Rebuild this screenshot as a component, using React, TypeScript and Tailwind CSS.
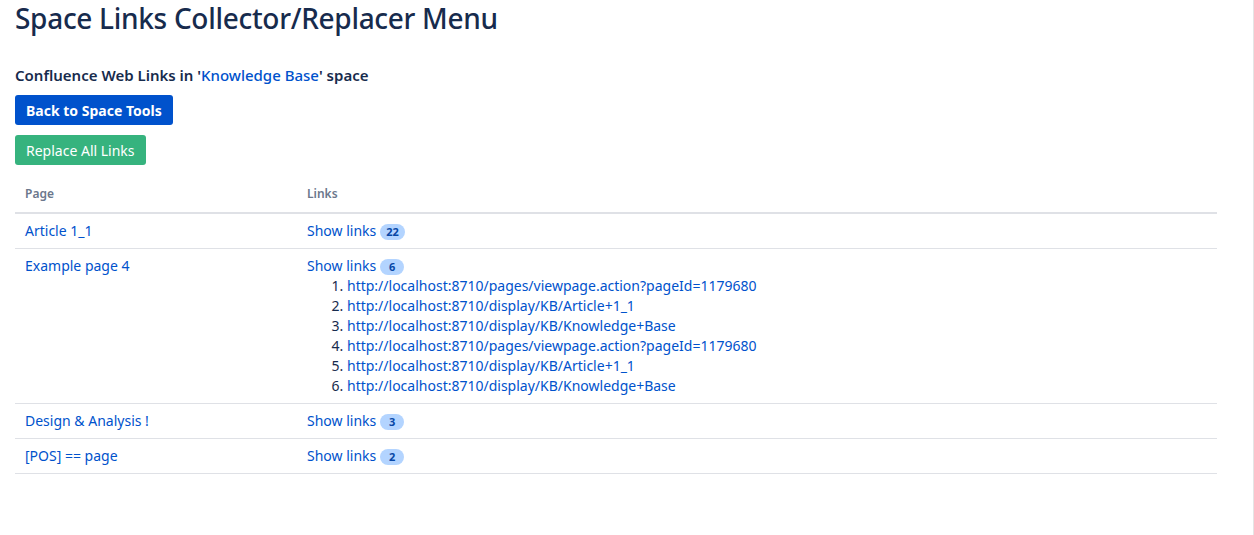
const rows = [
  { page: 'Article 1_1', count: 22, links: [] as string[] },
  {
    page: 'Example page 4',
    count: 6,
    links: [
      'http://localhost:8710/pages/viewpage.action?pageId=1179680',
      'http://localhost:8710/display/KB/Article+1_1',
      'http://localhost:8710/display/KB/Knowledge+Base',
      'http://localhost:8710/pages/viewpage.action?pageId=1179680',
      'http://localhost:8710/display/KB/Article+1_1',
      'http://localhost:8710/display/KB/Knowledge+Base',
    ],
  },
  { page: 'Design & Analysis !', count: 3, links: [] as string[] },
  { page: '[POS] == page', count: 2, links: [] as string[] },
];

export default function App() {
  return (
    <div
      className="h-[535px] w-[1254px] overflow-hidden bg-white text-[14px] text-[#172b4d] border-r border-[#e5e5e5]"
      style={{ fontFamily: '"Noto Sans", "Open Sans", sans-serif' }}
    >
      <div className="w-[1217px] pl-[15px]">
        <h1 className="pt-[1px] text-[28px] leading-[34px] font-medium tracking-[-0.3px]">
          Space Links Collector/Replacer Menu
        </h1>
        <h2 className="mt-[30px] text-[15px] leading-[20px] font-semibold">
          Confluence Web Links in '<a className="text-[#0052cc] font-medium">Knowledge Base</a>' space
        </h2>
        <div className="mt-[10px] flex flex-col items-start gap-[10px]">
          <button className="h-[30px] rounded-[3px] bg-[#0052cc] px-[11px] font-bold text-white">
            Back to Space Tools
          </button>
          <button className="h-[30px] rounded-[3px] bg-[#36b37e] px-[11px] text-white">
            Replace All Links
          </button>
        </div>
        <table className="mt-[14px] w-full border-collapse text-left">
          <thead>
            <tr className="border-b-2 border-[#dfe1e6]">
              <th className="w-[282px] px-[10px] pt-[6px] pb-[9px] text-[12px] font-semibold text-[#6b778c]">Page</th>
              <th className="px-[10px] pt-[6px] pb-[9px] text-[12px] font-semibold text-[#6b778c]">Links</th>
            </tr>
          </thead>
          <tbody>
            {rows.map((r) => (
              <tr key={r.page} className="border-b border-[#dfe1e6] align-top">
                <td className="px-[10px] py-[7px] leading-[20px] text-[#0052cc]">{r.page}</td>
                <td className="px-[10px] py-[7px] leading-[20px]">
                  <span className="text-[#0052cc]">Show links</span>
                  <span className="ml-[4px] inline-block min-w-[24px] rounded-full bg-[#b3d4ff] px-[6px] text-center text-[11px] leading-[16px] font-bold text-[#0747a6]">
                    {r.count}
                  </span>
                  {r.links.length > 0 && (
                    <ol className="list-decimal pl-[40px]">
                      {r.links.map((l, i) => (
                        <li key={i} className="text-[#172b4d]">
                          <a className="text-[#0052cc]">{l}</a>
                        </li>
                      ))}
                    </ol>
                  )}
                </td>
              </tr>
            ))}
          </tbody>
        </table>
      </div>
    </div>
  );
}
